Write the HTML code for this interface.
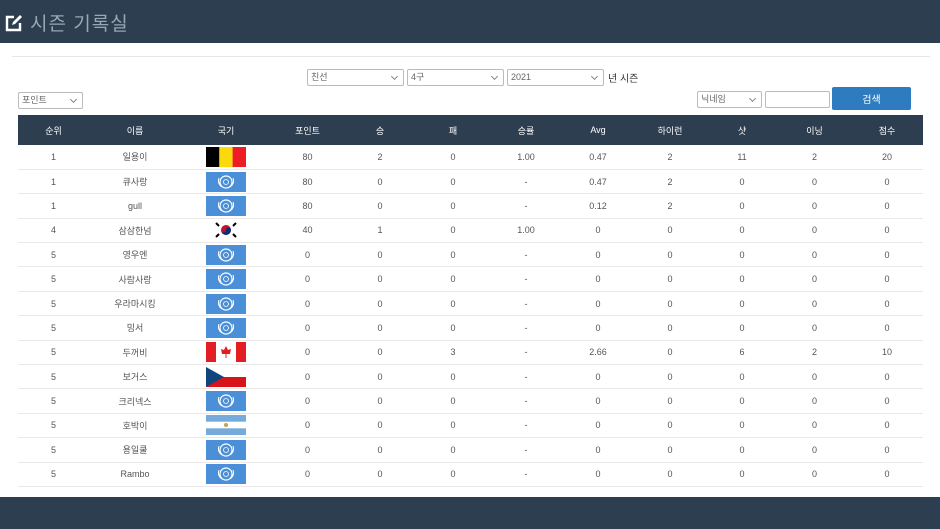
<!DOCTYPE html>
<html><head><meta charset="utf-8"><style>
*{margin:0;padding:0;box-sizing:border-box}
body{width:940px;height:529px;background:#fff;font-family:"Liberation Sans","Noto Sans CJK KR",sans-serif;position:relative;overflow:hidden;color:#555}
.hd{position:absolute;left:0;top:0;width:940px;height:43px;background:#2c3e50}
.hd .t{position:absolute;left:30px;top:9px;font-size:19px;color:#9aa7b4;letter-spacing:1px}
.ft{position:absolute;left:0;top:497px;width:940px;height:32px;background:#2c3e50}
.sep{position:absolute;left:12px;top:56px;width:918px;height:1px;background:#e6e6e6}
.sel{position:absolute;height:17px;border:1px solid #bbb;border-radius:2px;font-size:9px;color:#666;padding:0 3px;line-height:15px;background:#fff}
.sel:after{content:"";position:absolute;right:6px;top:4px;width:4px;height:4px;border-right:1px solid #888;border-bottom:1px solid #888;transform:rotate(45deg)}
.sel.noarrow:after{display:none}
table{position:absolute;left:18px;top:115px;width:905px;border-collapse:collapse;font-size:9px;table-layout:fixed}
th{background:#2c3e50;color:#fff;font-weight:normal;height:30px}
td{height:24.4px;text-align:center;border-bottom:1px solid #e8e8e8;color:#555;padding:0}
td svg{display:block;margin:0 auto}
.btn{position:absolute;left:832px;top:87px;width:79px;height:23px;background:#2f7bbf;border-radius:2px;color:#fff;font-size:10px;display:flex;align-items:center;justify-content:center}
</style></head><body>
<div class="hd">
<svg style="position:absolute;left:5px;top:15px" width="17" height="17" viewBox="0 0 17 17"><path d="M9 2H2v13h13V8" fill="none" stroke="#fff" stroke-width="2.4"/><path d="M7 10l1-3 7-7 2 2-7 7z" fill="#fff"/></svg>
<div class="t">시즌 기록실</div></div>
<div class="sep"></div>
<div class="sel" style="left:307px;top:69px;width:97px">친선</div>
<div class="sel" style="left:407px;top:69px;width:97px">4구</div>
<div class="sel" style="left:507px;top:69px;width:97px">2021</div>
<div style="position:absolute;left:608px;top:70px;font-size:10px;color:#333">년 시즌</div>
<div class="sel" style="left:18px;top:92px;width:65px">포인트</div>
<div class="sel" style="left:697px;top:91px;width:65px">닉네임</div>
<div class="sel noarrow" style="left:765px;top:91px;width:65px"></div>
<div class="btn">검색</div>
<svg width="0" height="0" style="position:absolute"><defs>
<g id="un"><rect width="40" height="20" fill="#4a8fd8"/><circle cx="20" cy="10" r="6" fill="none" stroke="#fff" stroke-width="1.2"/><circle cx="20" cy="10" r="2.5" fill="none" stroke="#fff" stroke-width=".8"/><path d="M13 6q-2 5 3 9M27 6q2 5-3 9" fill="none" stroke="#fff" stroke-width="1"/></g>
<g id="be"><rect width="13.4" height="20" fill="#000"/><rect x="13.3" width="13.4" height="20" fill="#fbd90d"/><rect x="26.6" width="13.4" height="20" fill="#ee1c25"/></g>
<g id="kr"><rect width="40" height="20" fill="#fff"/><circle cx="20" cy="10" r="5" fill="#c8102e"/><path d="M15 10a5 5 0 0 0 10 0a2.5 2.5 0 0 0-5 0a2.5 2.5 0 0 1-5 0z" fill="#003478"/><path d="M10 3l3 3M27 14l3 3M10 17l3-3M27 6l3-3" stroke="#000" stroke-width="2"/></g>
<g id="ca"><rect width="40" height="20" fill="#fff"/><rect width="10" height="20" fill="#e31d24"/><rect x="30" width="10" height="20" fill="#e31d24"/><path d="M20 4l2 4 3-1-1 5h-8l-1-5 3 1z M19.5 12h1v4h-1z" fill="#e31d24"/></g>
<g id="cz"><rect width="40" height="10" fill="#fff"/><rect y="10" width="40" height="10" fill="#d7141a"/><path d="M0 0l18 10L0 20z" fill="#11457e"/></g>
<g id="ar"><rect width="40" height="20" fill="#fff"/><rect width="40" height="6.7" fill="#75aadb"/><rect y="13.3" width="40" height="6.7" fill="#75aadb"/><circle cx="20" cy="10" r="2" fill="#c9a24b"/></g>
</defs></svg>
<table>
<colgroup><col style="width:71px"><col style="width:92px"><col style="width:90px"><col style="width:73px"><col style="width:72px"><col style="width:74px"><col style="width:72px"><col style="width:72px"><col style="width:72px"><col style="width:72px"><col style="width:73px"><col style="width:72px"></colgroup>
<tr><th>순위</th><th>이름</th><th>국기</th><th>포인트</th><th>승</th><th>패</th><th>승률</th><th>Avg</th><th>하이런</th><th>샷</th><th>이닝</th><th>점수</th></tr>
<tr><td>1</td><td>일용이</td><td><svg width="40" height="20"><use href="#be"/></svg></td><td>80</td><td>2</td><td>0</td><td>1.00</td><td>0.47</td><td>2</td><td>11</td><td>2</td><td>20</td></tr>
<tr><td>1</td><td>큐사랑</td><td><svg width="40" height="20"><use href="#un"/></svg></td><td>80</td><td>0</td><td>0</td><td>-</td><td>0.47</td><td>2</td><td>0</td><td>0</td><td>0</td></tr>
<tr><td>1</td><td>gull</td><td><svg width="40" height="20"><use href="#un"/></svg></td><td>80</td><td>0</td><td>0</td><td>-</td><td>0.12</td><td>2</td><td>0</td><td>0</td><td>0</td></tr>
<tr><td>4</td><td>삼삼한넘</td><td><svg width="40" height="20"><use href="#kr"/></svg></td><td>40</td><td>1</td><td>0</td><td>1.00</td><td>0</td><td>0</td><td>0</td><td>0</td><td>0</td></tr>
<tr><td>5</td><td>영우엔</td><td><svg width="40" height="20"><use href="#un"/></svg></td><td>0</td><td>0</td><td>0</td><td>-</td><td>0</td><td>0</td><td>0</td><td>0</td><td>0</td></tr>
<tr><td>5</td><td>사람사랑</td><td><svg width="40" height="20"><use href="#un"/></svg></td><td>0</td><td>0</td><td>0</td><td>-</td><td>0</td><td>0</td><td>0</td><td>0</td><td>0</td></tr>
<tr><td>5</td><td>우라마시킹</td><td><svg width="40" height="20"><use href="#un"/></svg></td><td>0</td><td>0</td><td>0</td><td>-</td><td>0</td><td>0</td><td>0</td><td>0</td><td>0</td></tr>
<tr><td>5</td><td>밍서</td><td><svg width="40" height="20"><use href="#un"/></svg></td><td>0</td><td>0</td><td>0</td><td>-</td><td>0</td><td>0</td><td>0</td><td>0</td><td>0</td></tr>
<tr><td>5</td><td>두꺼비</td><td><svg width="40" height="20"><use href="#ca"/></svg></td><td>0</td><td>0</td><td>3</td><td>-</td><td>2.66</td><td>0</td><td>6</td><td>2</td><td>10</td></tr>
<tr><td>5</td><td>보거스</td><td><svg width="40" height="20"><use href="#cz"/></svg></td><td>0</td><td>0</td><td>0</td><td>-</td><td>0</td><td>0</td><td>0</td><td>0</td><td>0</td></tr>
<tr><td>5</td><td>크리넥스</td><td><svg width="40" height="20"><use href="#un"/></svg></td><td>0</td><td>0</td><td>0</td><td>-</td><td>0</td><td>0</td><td>0</td><td>0</td><td>0</td></tr>
<tr><td>5</td><td>호박이</td><td><svg width="40" height="20"><use href="#ar"/></svg></td><td>0</td><td>0</td><td>0</td><td>-</td><td>0</td><td>0</td><td>0</td><td>0</td><td>0</td></tr>
<tr><td>5</td><td>용일쿨</td><td><svg width="40" height="20"><use href="#un"/></svg></td><td>0</td><td>0</td><td>0</td><td>-</td><td>0</td><td>0</td><td>0</td><td>0</td><td>0</td></tr>
<tr><td>5</td><td>Rambo</td><td><svg width="40" height="20"><use href="#un"/></svg></td><td>0</td><td>0</td><td>0</td><td>-</td><td>0</td><td>0</td><td>0</td><td>0</td><td>0</td></tr>
</table>
<div class="ft"></div>
</body></html>
